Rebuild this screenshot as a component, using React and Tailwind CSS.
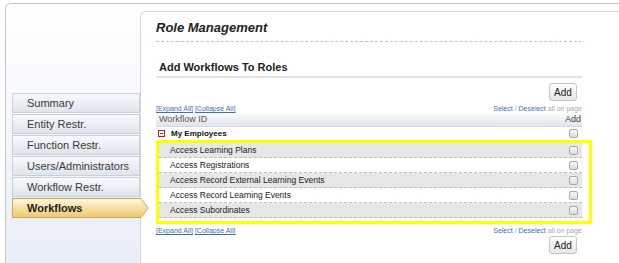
import React from "react";

const F = { fontFamily: '"Liberation Sans", Arial, sans-serif' };

function Checkbox() {
  return (
    <span className="inline-block w-[9px] h-[9px] rounded-[2px] border border-[#a9a9a9] bg-gradient-to-b from-[#f7f7f7] to-[#dcdcdc]" />
  );
}

function NavItem({ label, selected }) {
  if (selected) {
    return (
      <div className="relative h-[20px] mb-[1px] w-[128px] border border-r-0 border-[#caa95c] bg-gradient-to-b from-[#fdf6dc] to-[#efc96b] flex items-center pl-[14px] text-[11px] font-bold text-[#222]">
        {label}
        <svg className="absolute left-full top-[-1px]" width="9" height="20" viewBox="0 0 9 20">
          <defs>
            <linearGradient id="yg" x1="0" y1="0" x2="0" y2="1">
              <stop offset="0" stopColor="#fdf6dc" />
              <stop offset="1" stopColor="#efc96b" />
            </linearGradient>
          </defs>
          <path d="M0 0.5 L1 0.5 L8 10 L1 19.5 L0 19.5 Z" fill="url(#yg)" />
          <path d="M0 0.5 L1 0.5 L8 10 L1 19.5 L0 19.5" fill="none" stroke="#caa95c" strokeWidth="1" />
        </svg>
      </div>
    );
  }
  return (
    <div className="h-[20px] mb-[1px] w-[128px] border border-[#c9d1dc] bg-gradient-to-b from-[#f8f9fb] to-[#dfe4ec] flex items-center pl-[14px] text-[11px] text-[#3a3a3a]">
      {label}
    </div>
  );
}

function Links() {
  return (
    <div className="h-[9px] flex items-center justify-between text-[7px] leading-[9px]">
      <span className="text-[#3d6fb6]">
        <span className="underline">[Expand All]</span> <span className="underline">[Collapse All]</span>
      </span>
      <span>
        <span className="text-[#3d6fb6]">Select</span>
        <span className="text-[#999]"> / </span>
        <span className="text-[#3d6fb6]">Deselect</span>
        <span className="text-[#aaa]"> all on page</span>
      </span>
    </div>
  );
}

function AddButton() {
  return (
    <div className="flex justify-end pr-[5px]">
      <div className="w-[28px] h-[18px] rounded-[3px] border border-[#c4c4c4] bg-gradient-to-b from-[#ffffff] to-[#e6e6e6] flex items-center justify-center text-[10px] text-[#222]">
        Add
      </div>
    </div>
  );
}

const rows = [
  "Access Learning Plans",
  "Access Registrations",
  "Access Record External Learning Events",
  "Access Record Learning Events",
  "Access Subordinates",
];

export default function App() {
  return (
    <div style={F} className="w-[619px] h-[263px] bg-white overflow-hidden pt-[3px] pl-[5px]">
      <div className="flex h-[260px] border-t border-l border-[#c4c4c4] rounded-tl-[6px] overflow-hidden">
        <div className="w-[134px] shrink-0 bg-gradient-to-b from-[#ffffff] to-[#e8eef8] pt-[89px] pl-[6px] relative z-10">
          <NavItem label="Summary" />
          <NavItem label="Entity Restr." />
          <NavItem label="Function Restr." />
          <NavItem label="Users/Administrators" />
          <NavItem label="Workflow Restr." />
          <NavItem label="Workflows" selected />
        </div>
        <div className="flex-1 mt-[7px] border-t border-l border-[#d6d6d6] rounded-tl-[6px] bg-white pl-[15px] pr-[37px]">
          <div className="pt-[8px] h-[24px] text-[13px] leading-[16px] font-bold italic text-[#222]">
            Role Management
          </div>
          <div className="mt-[5px] border-b border-dashed border-[#b9c3cf]" />
          <div className="mt-[18px] h-[14px] text-[11px] leading-[14px] font-bold text-[#222] pl-[3px]">
            Add Workflows To Roles
          </div>
          <div className="mt-[2px] border-b-2 border-[#e2e2e2]" />
          <div className="mt-[5px]">
            <AddButton />
          </div>
          <div className="mt-[3px]">
            <Links />
          </div>
          <div className="mt-[1px] h-[13px] bg-gradient-to-b from-[#f7f8fa] to-[#e2e6ed] border-b border-[#d4d9e0] flex items-center justify-between pl-[3px] pr-[1px] text-[9px] text-[#555]">
            <span>Workflow ID</span>
            <span className="text-[#444]">Add</span>
          </div>
          <div className="h-[13px] flex items-center justify-between pl-[2px] pr-[4px] text-[8px] font-bold text-[#111]">
            <span className="flex items-center gap-[6px]">
              <span className="w-[7px] h-[7px] border border-[#b02020] flex items-center justify-center">
                <span className="w-[3px] h-px bg-[#b02020]" />
              </span>
              My Employees
            </span>
            <Checkbox />
          </div>
          <div className="mr-[-10px] border-[3px] border-[#ffff00] pr-[7px] pb-[3px]">
            {rows.map((r, i) => (
              <div
                key={r}
                className={`h-[15px] flex items-center justify-between pl-[11px] pr-[4px] text-[8.5px] text-[#222] border-b border-dashed border-[#b9c0ca] ${i % 2 === 0 ? "bg-[#e7e7e7]" : "bg-white"}`}
              >
                <span>{r}</span>
                <Checkbox />
              </div>
            ))}
          </div>
          <div className="mt-[2px]">
            <Links />
          </div>
          <div className="mt-[1px]">
            <AddButton />
          </div>
        </div>
      </div>
    </div>
  );
}
